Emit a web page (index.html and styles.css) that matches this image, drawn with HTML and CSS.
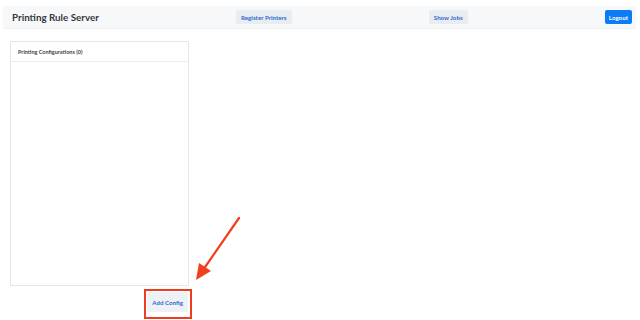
FILE: index.html
```html
<!DOCTYPE html>
<html lang="en">
<head>
  <meta charset="UTF-8" />
  <title>Printing Rule Server</title>
  <link rel="stylesheet" href="styles.css">
</head>
<body>

  <header class="topbar">
    <div class="brand">Printing Rule Server</div>
    <button class="nav-btn">Register Printers</button>
    <button class="nav-btn">Show Jobs</button>
    <button class="logout-btn">Logout</button>
  </header>

  <main class="content">
    <section class="config-col">
      <div class="panel">
        <div class="panel-head">Printing Configurations (0)</div>
        <div class="panel-body"></div>
      </div>
      <div class="panel-actions">
        <button class="nav-btn add-btn">Add Config</button>
      </div>
    </section>
  </main>

  <!-- annotation drawn over the page -->
  <div class="highlight"></div>
  <svg class="arrow" width="640" height="320" viewBox="0 0 640 320">
    <line x1="239" y1="218" x2="203" y2="270" stroke="#f0401f" stroke-width="2.2" stroke-linecap="round"/>
    <polygon points="196,280 199,263 211,271" fill="#f0401f"/>
  </svg>

</body>
</html>
```

FILE: styles.css
```css
* {
  margin: 0;
  padding: 0;
  box-sizing: border-box;
  font-family: Lato, 'Open Sans', sans-serif;
}

body {
  background: #fff;
  color: #333;
  width: 640px;
  height: 320px;
  overflow: hidden;
  position: relative;
}

.topbar {
  margin: 6px 4px 0 3px;
  height: 23px;
  background: #f7f8fa;
  border-bottom: 1px solid #eef0f2;
  display: flex;
  align-items: center;
  justify-content: space-between;
  padding: 0 4px 0 9px;
}

.brand {
  font-size: 9.8px;
  font-weight: 700;
  color: #343a40;
}

.nav-btn {
  background: #e9edf2;
  color: #2f6ad0;
  border: none;
  border-radius: 2px;
  font-size: 6.2px;
  font-weight: 700;
  height: 14px;
  padding: 0 5px;
}

.logout-btn {
  background: #0b7cf3;
  color: #fff;
  border: none;
  border-radius: 2px;
  font-size: 6.2px;
  font-weight: 700;
  height: 14px;
  padding: 0 4px;
}

.content {
  padding: 12px 0 0 10px;
}

.config-col {
  width: 179px;
  display: flex;
  flex-direction: column;
}

.panel {
  height: 245px;
  border: 1px solid #e6e6e6;
  display: flex;
  flex-direction: column;
}

.panel-head {
  height: 20px;
  border-bottom: 1px solid #ececec;
  font-size: 5.5px;
  font-weight: 700;
  color: #444;
  display: flex;
  align-items: center;
  padding-left: 7px;
}

.panel-body {
  flex: 1;
}

.panel-actions {
  display: flex;
  justify-content: flex-end;
  padding: 6px 1px 0 0;
}

.add-btn {
  height: 20px;
  padding: 0 5px;
  background: #eef1f5;
}

.highlight {
  position: absolute;
  left: 144px;
  top: 289px;
  width: 48px;
  height: 30px;
  border: 2px solid #ef3b1e;
}

.arrow {
  position: absolute;
  left: 0;
  top: 0;
}
```
